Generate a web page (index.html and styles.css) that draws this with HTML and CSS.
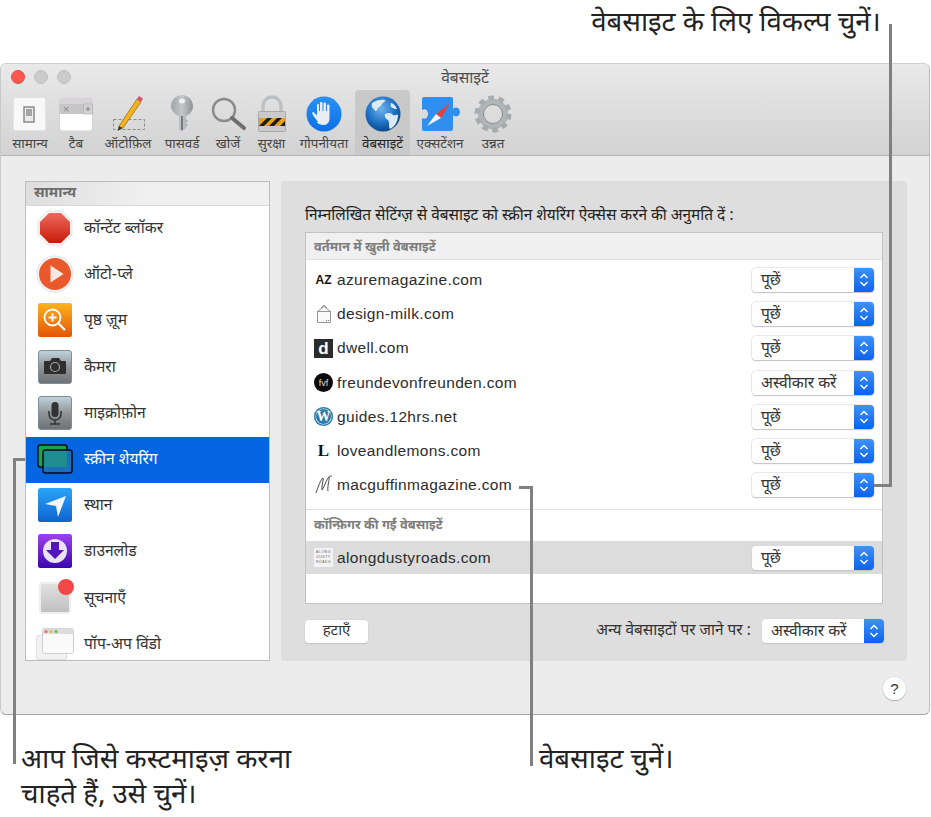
FILE: index.html
```html
<!DOCTYPE html>
<html lang="hi">
<head>
<meta charset="utf-8">
<title>वेबसाइटें</title>
<link rel="stylesheet" href="styles.css">
</head>
<body>
<div class="page">
  <header class="top-note"><p class="note">वेबसाइट के लिए विकल्प चुनें।</p></header>

  <section class="window">
    <div class="toolbar">
      <div class="lights"><i class="light red"></i><i class="light"></i><i class="light"></i></div>
      <div class="win-title">वेबसाइटें</div>
      <nav class="tools">
        <div class="tool">
          <svg width="36" height="38" viewBox="0 0 36 38"><rect x="1.500" y="2.500" width="32" height="33" rx="2" fill="#f8f8f8" stroke="#e4e4e4"/><rect x="12" y="12" width="10" height="15" fill="#ececec" stroke="#8a8a8a" stroke-width="1.500"/><rect x="14" y="14" width="6" height="7" fill="#a4a4a4"/></svg>
          <span>सामान्य</span>
        </div>
        <div class="tool">
          <svg width="36" height="38" viewBox="0 0 36 38"><rect x="1.500" y="3" width="33" height="33" rx="3" fill="#fff" stroke="#d4d4d4"/><path d="M1.500 6a3 3 0 0 1 3-3h28a3 3 0 0 1 2 3v3h-33z" fill="#d6d4d6"/><rect x="1.500" y="9" width="33" height="10" fill="#c6c6c6"/><rect x="25.500" y="9" width="9" height="10" fill="#d4d4d4" stroke="#aaa" stroke-width=".6"/><path d="M6 12l4.500 4.500M10.500 12L6 16.500M27.500 14h5M30 11.500v5" stroke="#777" stroke-width=".8" fill="none"/></svg>
          <span>टैब</span>
        </div>
        <div class="tool">
          <svg width="38" height="38" viewBox="0 0 38 38"><rect x="4.500" y="24.500" width="31" height="10" fill="none" stroke="#8a8a8a" stroke-dasharray="3 2"/><path d="M10 31L28 4l4 3L14 33l-4 1z" fill="#f5b21e" stroke="#8a6a10" stroke-width=".7"/><path d="M28 4l2-3 4 2.500-2 3.500z" fill="#d5526d"/><path d="M10 31l-1.500 5 5-3z" fill="#333"/></svg>
          <span>ऑटोफ़िल</span>
        </div>
        <div class="tool">
          <svg width="38" height="38" viewBox="0 0 38 38"><defs><linearGradient id="key" x1="0" x2="1"><stop offset="0" stop-color="#9fa4a8"/><stop offset=".5" stop-color="#c4c8ca"/><stop offset="1" stop-color="#8e9397"/></linearGradient></defs><path d="M19 0c6 0 11 5 11 11 0 5-3 8-7 10v3l2 2-2 2 2 2-2 2v1l-4 4-3-3V21c-5-2-8-6-8-10C8 5 13 0 19 0z" fill="url(#key)"/><ellipse cx="19" cy="6" rx="3" ry="2.500" fill="#f0f1f2"/><rect x="18" y="21" width="2" height="14" fill="#75797d"/></svg>
          <span>पासवर्ड</span>
        </div>
        <div class="tool">
          <svg width="38" height="38" viewBox="0 0 38 38"><circle cx="15" cy="15" r="11" fill="none" stroke="#8b8b8b" stroke-width="2.500"/><path d="M23 23l12 10" stroke="#6e6e6e" stroke-width="4" stroke-linecap="round"/></svg>
          <span>खोजें</span>
        </div>
        <div class="tool">
          <svg width="32" height="38" viewBox="0 0 32 38"><path d="M7 17v-6a9 9 0 0 1 18 0v6" fill="none" stroke="#bcc1c5" stroke-width="3.500"/><rect x="2.500" y="16.500" width="27" height="20" rx="1" fill="#cacaca" stroke="#a8a8a8"/><rect x="3" y="23" width="26" height="8" fill="#e9a21c"/><path d="M3 31l8-8h5l-8 8zM13 31l8-8h5l-8 8zM24 31l5-5v5z" fill="#1c1c1c"/></svg>
          <span>सुरक्षा</span>
        </div>
        <div class="tool">
          <svg width="38" height="38" viewBox="0 0 38 38"><defs><linearGradient id="blue" x1="0" x2="0" y1="0" y2="1"><stop offset="0" stop-color="#2a92f5"/><stop offset="1" stop-color="#0b6fe6"/></linearGradient></defs><circle cx="19" cy="19" r="17.500" fill="url(#blue)"/><path d="M13 27c-2-3-5-6-6-9 0-1 1-1 2-.5l3 3V10c0-1.500 2-1.500 2 0v6h1V8c0-1.500 2.500-1.500 2.500 0v8h1V8.500c0-1.500 2.500-1.500 2.500 0V16h1v-5.500c0-1.500 2.500-1.500 2.500 0V23c0 4-2 7-6 7-3 0-5-1-7-3z" fill="#e9eef5"/></svg>
          <span>गोपनीयता</span>
        </div>
        <div class="tool active">
          <svg width="38" height="38" viewBox="0 0 38 38"><defs><radialGradient id="globe" cx=".45" cy=".35" r=".7"><stop offset="0" stop-color="#6fb4ee"/><stop offset=".6" stop-color="#1b6fc2"/><stop offset="1" stop-color="#0d3f7d"/></radialGradient></defs><circle cx="19" cy="19" r="17.500" fill="url(#globe)"/><path d="M8 8c4-3 10-4 13-3 1 2-2 2-3 4-1 3-4 3-5 6-1 2-2 1-3-1-1 0-3-3-2-6zM21 19c3-2 7-1 8 1 2 1 4-1 5 0 0 6-3 12-8 14-2-3 0-6-2-9-2-1-4-3-3-6zM27 8c2 0 5 3 6 6-2 0-3 0-4-1-2 0-3-3-2-5z" fill="#dbe9f2"/></svg>
          <span>वेबसाइटें</span>
        </div>
        <div class="tool">
          <svg width="42" height="38" viewBox="0 0 42 38"><path d="M5 2h27a2 2 0 0 1 2 2v10c3-3 7-1 7 3s-4 6-7 3v14a2 2 0 0 1-2 2H5a2 2 0 0 1-2-2V23c3 2 6 0 6-4s-3-6-6-4V4a2 2 0 0 1 2-2z" fill="#2f8ff0"/><path d="M31 8L17 19l5 4z" fill="#e8403a"/><path d="M8 31l9-12 5 4z" fill="#f3f3f3"/></svg>
          <span>एक्सटेंशन</span>
        </div>
        <div class="tool">
          <svg width="38" height="38" viewBox="0 0 38 38"><circle cx="19" cy="19" r="12.500" fill="none" stroke="#b0b5b8" stroke-width="5.500"/><circle cx="19" cy="19" r="16" fill="none" stroke="#a6abae" stroke-width="5" stroke-dasharray="5.500 4.550"/><circle cx="19" cy="19" r="9.500" fill="none" stroke="#85898c"/></svg>
          <span>उन्नत</span>
        </div>
      </nav>
    </div>

    <div class="content">
      <div class="panes">
        <aside class="list">
          <div class="list-head">सामान्य</div>
          <div class="list-row">
            <svg class="row-icon" width="36" height="36" viewBox="0 0 36 36"><defs><linearGradient id="stop" x1="0" x2="0" y1="0" y2="1"><stop offset="0" stop-color="#ec6a5e"/><stop offset="1" stop-color="#c81a08"/></linearGradient></defs><path d="M11 1h14l10 10v14L25 35H11L1 25V11z" fill="#f4f4f4" stroke="#e4e4e4"/><path d="M12 3h12l9 9v12l-9 9H12l-9-9V12z" fill="url(#stop)"/></svg>
            <span>कॉन्टेंट ब्लॉकर</span>
          </div>
          <div class="list-row">
            <svg class="row-icon" width="38" height="38" viewBox="0 0 38 38"><circle cx="19" cy="19" r="18" fill="#f5f5f5" stroke="#e2e2e2"/><circle cx="19" cy="19" r="16" fill="#e9592c"/><path d="M14.500 10.500l13 8.500-13 8.500z" fill="#f2e9e4"/></svg>
            <span>ऑटो-प्ले</span>
          </div>
          <div class="list-row">
            <svg class="row-icon" width="34" height="34" viewBox="0 0 34 34"><defs><linearGradient id="zoom" x1="0" x2="0" y1="0" y2="1"><stop offset="0" stop-color="#fdb320"/><stop offset="1" stop-color="#e45405"/></linearGradient></defs><rect width="34" height="34" rx="2.500" fill="url(#zoom)"/><circle cx="14.500" cy="14.500" r="8" fill="none" stroke="#fff" stroke-width="1.800"/><path d="M20.500 20.500l6.500 6.500" stroke="#fff" stroke-width="2.200"/><path d="M10.500 14.500h8M14.500 10.500v8" stroke="#fff" stroke-width="2"/></svg>
            <span>पृष्ठ ज़ूम</span>
          </div>
          <div class="list-row">
            <svg class="row-icon" width="34" height="34" viewBox="0 0 34 34"><defs><linearGradient id="cam" x1="0" x2="0" y1="0" y2="1"><stop offset="0" stop-color="#c2d4dd"/><stop offset=".5" stop-color="#909597"/><stop offset="1" stop-color="#6e7173"/></linearGradient></defs><rect x=".5" y=".5" width="33" height="33" rx="2.500" fill="url(#cam)" stroke="#7b8f9c"/><path d="M7 11h5l2-3h7l2 3h4a1 1 0 0 1 1 1v11a1 1 0 0 1-1 1H7a1 1 0 0 1-1-1V12a1 1 0 0 1 1-1z" fill="#2e2e2e"/><circle cx="17" cy="17" r="4.500" fill="#2e2e2e" stroke="#a5a5a5" stroke-width="1.200"/></svg>
            <span>कैमरा</span>
          </div>
          <div class="list-row">
            <svg class="row-icon" width="34" height="34" viewBox="0 0 34 34"><rect x=".5" y=".5" width="33" height="33" rx="2.500" fill="url(#cam)" stroke="#7b8f9c"/><rect x="13.500" y="6" width="7" height="15" rx="3.500" fill="#333"/><path d="M11 15v3a6 6 0 0 0 12 0v-3M17 24v4M12 28h10" fill="none" stroke="#333" stroke-width="1.500"/></svg>
            <span>माइक्रोफ़ोन</span>
          </div>
          <div class="list-row selected">
            <svg class="row-icon" width="36" height="30" viewBox="0 0 36 30"><rect x="1" y="1" width="29" height="22" rx="2.500" fill="#1fa34a" stroke="#0a0f10" stroke-width="1.500"/><rect x="6" y="6" width="29" height="23" rx="2.500" fill="#1d6dbd" stroke="#050b1c" stroke-width="1.500"/><rect x="7" y="7" width="23" height="16" fill="#1f8c8f"/></svg>
            <span>स्क्रीन शेयरिंग</span>
          </div>
          <div class="list-row">
            <svg class="row-icon" width="34" height="34" viewBox="0 0 34 34"><defs><linearGradient id="loc" x1="0" x2="0" y1="0" y2="1"><stop offset="0" stop-color="#2aa4f8"/><stop offset="1" stop-color="#0f63d0"/></linearGradient></defs><rect width="34" height="34" rx="2.500" fill="url(#loc)"/><path d="M7 16L28 8l-8 21-2-11z" fill="#eef5fc"/></svg>
            <span>स्थान</span>
          </div>
          <div class="list-row">
            <svg class="row-icon" width="34" height="34" viewBox="0 0 34 34"><defs><linearGradient id="dl" x1="0" x2="0" y1="0" y2="1"><stop offset="0" stop-color="#a040f0"/><stop offset="1" stop-color="#3a06b0"/></linearGradient></defs><rect width="34" height="34" rx="2.500" fill="url(#dl)"/><circle cx="17" cy="17" r="12" fill="#e9e4f2"/><path d="M13 8h8v8h5l-9 9-9-9h5z" fill="#5514c4"/></svg>
            <span>डाउनलोड</span>
          </div>
          <div class="list-row">
            <span class="note-icon"><i class="note-dot"></i></span>
            <span>सूचनाएँ</span>
          </div>
          <div class="list-row">
            <svg class="row-icon" width="38" height="32" viewBox="0 0 38 32"><rect x=".5" y="7.500" width="30" height="24" rx="1.500" fill="#f2f2f2" stroke="#e0e0e0"/><rect x="6.500" y=".5" width="31" height="25" rx="2" fill="#fafafa" stroke="#cfcfcf"/><path d="M6.500 2.500a2 2 0 0 1 2-2h27a2 2 0 0 1 2 2V6h-31z" fill="#dcdcdc"/><circle cx="10" cy="3.500" r="1.500" fill="#ec6a5e"/><circle cx="15" cy="3.500" r="1.500" fill="#f0b73c"/><circle cx="20" cy="3.500" r="1.500" fill="#5ec04f"/></svg>
            <span>पॉप-अप विंडो</span>
          </div>
        </aside>

        <main class="panel">
          <p class="panel-title">निम्नलिखित सेटिंग्ज़ से वेबसाइट को स्क्रीन शेयरिंग ऐक्सेस करने की अनुमति दें :</p>
          <div class="table">
            <div class="table-head">वर्तमान में खुली वेबसाइटें</div>
            <div class="rows">
              <div class="site">
                <span class="fav az">AZ</span><span class="site-name">azuremagazine.com</span>
                <span class="select"><span class="select-text">पूछें</span><span class="stepper"><svg width="10" height="16" viewBox="0 0 10 16"><path d="M1.500 6L5 2.500 8.500 6M1.500 10L5 13.500 8.500 10" fill="none" stroke="#fff" stroke-width="1.400"/></svg></span></span>
              </div>
              <div class="site">
                <span class="fav"><svg width="18" height="20" viewBox="0 0 18 20"><path d="M2.500 7.500h13v11h-13zM2.500 7.500L9 2.500l6.500 5M6 4l3-3 3 3" fill="#fafafa" stroke="#8a8a8a" stroke-width=".9"/><path d="M11 16.500h1M13 16.500h1" stroke="#777"/></svg></span><span class="site-name">design-milk.com</span>
                <span class="select"><span class="select-text">पूछें</span><span class="stepper"><svg width="10" height="16" viewBox="0 0 10 16"><path d="M1.500 6L5 2.500 8.500 6M1.500 10L5 13.500 8.500 10" fill="none" stroke="#fff" stroke-width="1.400"/></svg></span></span>
              </div>
              <div class="site">
                <span class="fav dwell">d</span><span class="site-name">dwell.com</span>
                <span class="select"><span class="select-text">पूछें</span><span class="stepper"><svg width="10" height="16" viewBox="0 0 10 16"><path d="M1.500 6L5 2.500 8.500 6M1.500 10L5 13.500 8.500 10" fill="none" stroke="#fff" stroke-width="1.400"/></svg></span></span>
              </div>
              <div class="site">
                <span class="fav fvf">fvf</span><span class="site-name">freundevonfreunden.com</span>
                <span class="select"><span class="select-text">अस्वीकार करें</span><span class="stepper"><svg width="10" height="16" viewBox="0 0 10 16"><path d="M1.500 6L5 2.500 8.500 6M1.500 10L5 13.500 8.500 10" fill="none" stroke="#fff" stroke-width="1.400"/></svg></span></span>
              </div>
              <div class="site">
                <span class="fav wp">W</span><span class="site-name">guides.12hrs.net</span>
                <span class="select"><span class="select-text">पूछें</span><span class="stepper"><svg width="10" height="16" viewBox="0 0 10 16"><path d="M1.500 6L5 2.500 8.500 6M1.500 10L5 13.500 8.500 10" fill="none" stroke="#fff" stroke-width="1.400"/></svg></span></span>
              </div>
              <div class="site">
                <span class="fav lemons">L</span><span class="site-name">loveandlemons.com</span>
                <span class="select"><span class="select-text">पूछें</span><span class="stepper"><svg width="10" height="16" viewBox="0 0 10 16"><path d="M1.500 6L5 2.500 8.500 6M1.500 10L5 13.500 8.500 10" fill="none" stroke="#fff" stroke-width="1.400"/></svg></span></span>
              </div>
              <div class="site">
                <span class="fav"><svg width="18" height="20" viewBox="0 0 18 20"><path d="M1 18C3 12 6 4 8 3c1 0-2 11-1 12 1 0 5-12 7-13 1 0-2 11-1 14M14 2c1-1 2-1 3-1" fill="none" stroke="#333" stroke-width=".9"/></svg></span><span class="site-name">macguffinmagazine.com</span>
                <span class="select"><span class="select-text">पूछें</span><span class="stepper"><svg width="10" height="16" viewBox="0 0 10 16"><path d="M1.500 6L5 2.500 8.500 6M1.500 10L5 13.500 8.500 10" fill="none" stroke="#fff" stroke-width="1.400"/></svg></span></span>
              </div>
            </div>
            <div class="table-sub">कॉन्फ़िगर की गईं वेबसाइटें</div>
            <div class="site chosen">
              <span class="fav dusty">ALONG<br>DUSTY<br>ROADS</span><span class="site-name">alongdustyroads.com</span>
              <span class="select"><span class="select-text">पूछें</span><span class="stepper"><svg width="10" height="16" viewBox="0 0 10 16"><path d="M1.500 6L5 2.500 8.500 6M1.500 10L5 13.500 8.500 10" fill="none" stroke="#fff" stroke-width="1.400"/></svg></span></span>
            </div>
          </div>
          <div class="panel-foot">
            <button class="btn">हटाएँ</button>
            <span class="other">अन्य वेबसाइटों पर जाने पर :</span>
            <span class="select wide"><span class="select-text">अस्वीकार करें</span><span class="stepper"><svg width="10" height="16" viewBox="0 0 10 16"><path d="M1.500 6L5 2.500 8.500 6M1.500 10L5 13.500 8.500 10" fill="none" stroke="#fff" stroke-width="1.400"/></svg></span></span>
          </div>
        </main>
      </div>
      <div class="help-row"><span class="help">?</span></div>
    </div>
  </section>

  <footer class="bottom-notes">
    <p class="note note-left">आप जिसे कस्टमाइज़ करना<br>चाहते हैं, उसे चुनें।</p>
    <p class="note note-mid">वेबसाइट चुनें।</p>
  </footer>

  <i class="line l-top"></i><i class="line l-top-h"></i>
  <i class="line l-left"></i><i class="line l-left-h"></i>
  <i class="line l-mid"></i><i class="line l-mid-h"></i>
</div>
</body>
</html>
```

FILE: styles.css
```css
* { box-sizing: border-box; }
html, body { margin: 0; padding: 0; background: #fff; }
body { font-family: "Noto Sans Devanagari", "Noto Sans", "Liberation Sans", sans-serif; color: #2b2b2b; }
.page { position: relative; width: 931px; height: 817px; overflow: hidden; }
p { margin: 0; }

.top-note { height: 63px; display: flex; justify-content: flex-end; padding: 7px 50px 0 0; }
.note { font-size: 27.600px; line-height: 35px; color: #222; white-space: nowrap; }

.window { width: 930px; height: 652px; border: 1px solid #bdbdbd; border-left-color: #c9c9c9; border-radius: 6px; border-top-color: #cfcfcf; border-bottom-color: #a5a5a5; background: #ececec; overflow: hidden; }

.toolbar { position: relative; height: 92px; background: linear-gradient(#e9e9e9, #d2d2d2); border-bottom: 1px solid #b5b5b5; }
.lights { position: absolute; left: 10px; top: 6px; display: flex; gap: 9px; }
.light { width: 14px; height: 14px; border-radius: 50%; background: #cbcbcb; border: 1px solid #c0c0c0; }
.light.red { background: #fc5753; border-color: #ec4a45; }
.win-title { text-align: center; font-size: 15.600px; line-height: 20px; padding: 5px 0 0 0; color: #4e4e4e; height: 26px; }
.tools { display: flex; padding-left: 5px; height: 65px; }
.tool { display: flex; flex-direction: column; align-items: center; justify-content: flex-end; padding-bottom: 2px; font-size: 13.400px; line-height: 17px; color: #444; border-radius: 4px 4px 0 0; white-space: nowrap; }
.tool svg { margin-bottom: 3px; flex: none; }
.tool:nth-child(1) { width: 48px; }
.tool:nth-child(2) { width: 44px; }
.tool:nth-child(3) { width: 60px; }
.tool:nth-child(4) { width: 48px; }
.tool:nth-child(5) { width: 44px; }
.tool:nth-child(6) { width: 43px; }
.tool:nth-child(7) { width: 62px; }
.tool:nth-child(8) { width: 55px; }
.tool:nth-child(9) { width: 60px; }
.tool:nth-child(10) { width: 46px; }
.tool.active { background: #c9c9c9; color: #222; }

.content { padding: 25px 22px 0 24px; }
.panes { display: flex; gap: 11px; height: 480px; }

.list { width: 245px; height: 480px; flex: none; background: #fff; border: 1px solid #bcbcbc; overflow: hidden; }
.list-head { height: 24px; padding-left: 8px; font-size: 14.400px; font-weight: 700; line-height: 24px; color: #6d6d6d; background: linear-gradient(90deg, #dedede, #f0f0f0 50%); border-bottom: 1px solid #d8d8d8; }
.list-row { height: 46.2px; display: flex; align-items: center; position: relative; padding-left: 58px; font-size: 15.600px; color: #333; white-space: nowrap; }
.row-icon, .note-icon { position: absolute; left: 29px; top: 50%; transform: translate(-50%, calc(-50% - 1px)); }
.list-row.selected { background: #0564e0; color: #fff; }
.note-icon { width: 32px; height: 32px; background: linear-gradient(#e0e0e0, #c0c0c0); border: 2px solid #eee; border-radius: 3px; }
.note-dot { position: absolute; right: -5px; top: -5px; width: 16px; height: 16px; border-radius: 50%; background: #f3484a; }

.panel { flex: 1; height: 480px; background: #dedede; border-radius: 4px; padding: 20px 24px 0; }
.panel-title { font-size: 15.400px; line-height: 30px; color: #222; height: 31px; white-space: nowrap; }
.table { width: 578px; height: 372px; background: #fff; border: 1px solid #c2c2c2; }
.table-head { height: 27px; padding-left: 8px; font-size: 12.900px; font-weight: 700; line-height: 29px; color: #7d7d7d; background: #f0f0f0; border-bottom: 1px solid #e2e2e2; }
.rows { padding-top: 2.500px; height: 250px; border-bottom: 1px solid #dedede; }
.table-sub { height: 31px; padding-left: 8px; font-size: 12.900px; font-weight: 700; line-height: 32px; color: #7d7d7d; }
.site { display: flex; align-items: center; height: 34.3px; padding: 0 8px 0 8px; }
.site.chosen { height: 33px; background: #dcdcdc; }
.site-name { font-family: "Liberation Sans", sans-serif; font-size: 15.500px; letter-spacing: .35px; color: #2c2c2c; margin-left: 4px; }
.fav { width: 19px; height: 19px; flex: none; display: flex; align-items: center; justify-content: center; font-family: "Liberation Sans", sans-serif; }
.az { font-size: 12px; font-weight: 700; color: #111; }
.dwell { background: #2b2b2b; color: #fff; font-weight: 700; font-size: 17px; line-height: 19px; }
.fvf { background: #0b0b0b; color: #ddd; border-radius: 50%; font-size: 9px; }
.wp { background: #2a7ba8; color: #fff; border-radius: 50%; font-family: "Liberation Serif", serif; font-size: 14px; font-weight: 700; box-shadow: inset 0 0 0 1.500px #2a7ba8, inset 0 0 0 2px #fff; }
.lemons { font-family: "Liberation Serif", serif; font-weight: 700; font-size: 17px; color: #111; }
.dusty { background: #f3f3f3; color: #666; font-size: 3.500px; line-height: 5px; letter-spacing: .5px; text-align: center; }

.select { margin-left: auto; width: 122px; height: 24px; display: flex; background: #fff; border-radius: 4px; box-shadow: 0 0 0 .5px #d4d4d4, 0 1px 1px #b5b5b5; font-size: 15.600px; color: #333; overflow: hidden; }
.select-text { flex: 1; padding-left: 9px; line-height: 27px; white-space: nowrap; }
.stepper { width: 20px; display: flex; align-items: center; justify-content: center; background: linear-gradient(#3f92f6, #0c62ee); }

.panel-foot { display: flex; align-items: center; height: 24px; margin-top: 15px; }
.btn { width: 63px; height: 23px; padding: 0; border: 0; border-radius: 4px; background: #fff; box-shadow: 0 0 0 .5px #d4d4d4, 0 1px 1px #b5b5b5; font: inherit; font-size: 15px; line-height: 24px; color: #333; }
.other { margin-left: auto; font-size: 15.400px; line-height: 26px; color: #333; }
.select.wide { margin-left: 11px; margin-right: -1px; }

.help-row { display: flex; justify-content: flex-end; padding: 16px 1px 0 0; }
.help { width: 23px; height: 23px; border-radius: 50%; background: #fff; box-shadow: 0 0 0 .5px #d0d0d0, 0 1px 1px #aaa; text-align: center; font-family: "Liberation Sans", sans-serif; font-size: 15px; line-height: 23px; color: #333; }

.bottom-notes { display: flex; padding: 29px 0 0 21px; }
.note-left { width: 518px; }

.line { position: absolute; background: #808080; display: block; }
.l-top { left: 889px; top: 24px; width: 3px; height: 463px; }
.l-top-h { left: 874px; top: 484px; width: 18px; height: 3px; }
.l-left { left: 13px; top: 458px; width: 3px; height: 306px; }
.l-left-h { left: 13px; top: 458px; width: 12px; height: 3px; }
.l-mid { left: 530px; top: 486px; width: 3px; height: 280px; }
.l-mid-h { left: 519px; top: 486px; width: 14px; height: 3px; }
```
